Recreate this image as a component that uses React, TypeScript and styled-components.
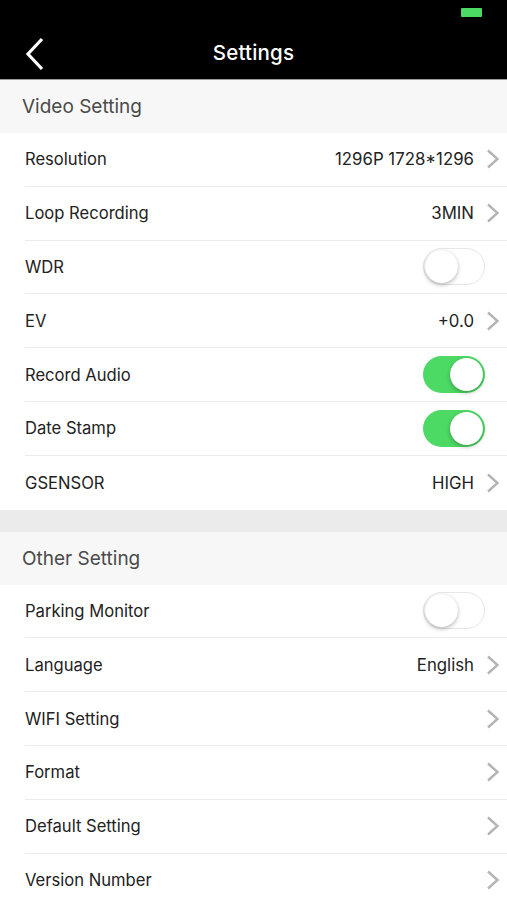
import React, { useState } from 'react'
import styled, { createGlobalStyle } from 'styled-components'

const GlobalStyle = createGlobalStyle`
  html, body {
    margin: 0;
    padding: 0;
    background: #ffffff;
  }
  body {
    font-family: Inter, "Noto Sans", "Liberation Sans", sans-serif;
    -webkit-font-smoothing: antialiased;
  }
`

const Page = styled.div`
  width: 507px;
  height: 900px;
  overflow: hidden;
  background: #ffffff;
`

const TopBar = styled.div`
  position: relative;
  height: 80px;
  background: #000000;
  border-bottom: 1px solid #9a9a9a;
  box-sizing: border-box;
  display: flex;
  align-items: center;
  justify-content: center;
  padding-top: 26px;
`

const Battery = styled.div`
  position: absolute;
  top: 8px;
  left: 461px;
  width: 21px;
  height: 9px;
  border-radius: 1px;
  background: #4cd964;
`

const BackButton = styled.button`
  position: absolute;
  left: 20px;
  top: 35px;
  width: 30px;
  height: 38px;
  padding: 0;
  border: none;
  background: transparent;
  display: flex;
  align-items: center;
  justify-content: center;
`

const Title = styled.h1`
  margin: 0;
  color: #ffffff;
  font-size: 20.5px;
  font-weight: 500;
  letter-spacing: 0.2px;
`

const SectionHeader = styled.div`
  height: 53px;
  background: #f7f7f7;
  display: flex;
  align-items: center;
  padding-left: 22px;
  font-size: 19px;
  color: #4a4a4a;
`

const Gap = styled.div`
  height: 22px;
  background: #ebebeb;
`

const List = styled.div`
  background: #ffffff;
  padding-left: 25px;
`

const Row = styled.div<{ $last?: boolean }>`
  height: 53.8px;
  box-sizing: border-box;
  display: flex;
  align-items: center;
  padding-right: 7px;
  border-bottom: ${(p) => (p.$last ? 'none' : '1px solid #ececec')};
`

const Label = styled.span`
  flex: 1;
  font-size: 16.6px;
  color: #222222;
`

const Value = styled.span`
  font-size: 16.8px;
  color: #222222;
  margin-right: 12px;
`

const ToggleTrack = styled.button<{ $on: boolean }>`
  position: relative;
  width: 62px;
  height: 37px;
  margin-right: 15px;
  padding: 0;
  border-radius: 19px;
  cursor: pointer;
  box-sizing: border-box;
  border: ${(p) => (p.$on ? 'none' : '1.5px solid #e6e6e6')};
  background: ${(p) => (p.$on ? '#4cd964' : '#ffffff')};
`

const ToggleKnob = styled.span<{ $on: boolean }>`
  position: absolute;
  top: ${(p) => (p.$on ? '2px' : '0.5px')};
  left: ${(p) => (p.$on ? '27px' : '0.5px')};
  width: 33px;
  height: 33px;
  border-radius: 50%;
  background: #ffffff;
  box-shadow: 0 2px 4px rgba(0, 0, 0, 0.25), 0 0 1px rgba(0, 0, 0, 0.15);
`

const Chevron = () => (
  <svg width="14" height="20" viewBox="0 0 14 20">
    <path d="M2 1.5 L11.5 10 L2 18.5" fill="none" stroke="#b4b4b4" strokeWidth="2.4" />
  </svg>
)

type Item =
  | { label: string; kind: 'value'; value?: string }
  | { label: string; kind: 'toggle'; on: boolean }

const videoItems: Item[] = [
  { label: 'Resolution', kind: 'value', value: '1296P 1728*1296' },
  { label: 'Loop Recording', kind: 'value', value: '3MIN' },
  { label: 'WDR', kind: 'toggle', on: false },
  { label: 'EV', kind: 'value', value: '+0.0' },
  { label: 'Record Audio', kind: 'toggle', on: true },
  { label: 'Date Stamp', kind: 'toggle', on: true },
  { label: 'GSENSOR', kind: 'value', value: 'HIGH' },
]

const otherItems: Item[] = [
  { label: 'Parking Monitor', kind: 'toggle', on: false },
  { label: 'Language', kind: 'value', value: 'English' },
  { label: 'WIFI Setting', kind: 'value' },
  { label: 'Format', kind: 'value' },
  { label: 'Default Setting', kind: 'value' },
  { label: 'Version Number', kind: 'value' },
]

const Toggle: React.FC<{ initial: boolean }> = ({ initial }) => {
  const [on, setOn] = useState(initial)
  return (
    <ToggleTrack $on={on} onClick={() => setOn(!on)}>
      <ToggleKnob $on={on} />
    </ToggleTrack>
  )
}

const SettingRow: React.FC<{ item: Item; last?: boolean }> = ({ item, last }) => (
  <Row $last={last}>
    <Label>{item.label}</Label>
    {item.kind === 'toggle' ? (
      <Toggle initial={item.on} />
    ) : (
      <>
        {item.value && <Value>{item.value}</Value>}
        <Chevron />
      </>
    )}
  </Row>
)

export default function App() {
  return (
    <Page>
      <GlobalStyle />
      <TopBar>
        <Battery />
        <BackButton>
          <svg width="20" height="34" viewBox="0 0 20 34">
            <path d="M17 2 L3 17 L17 32" fill="none" stroke="#ffffff" strokeWidth="3.2" />
          </svg>
        </BackButton>
        <Title>Settings</Title>
      </TopBar>
      <SectionHeader>Video Setting</SectionHeader>
      <List>
        {videoItems.map((it, i) => (
          <SettingRow key={it.label} item={it} last={i === videoItems.length - 1} />
        ))}
      </List>
      <Gap />
      <SectionHeader>Other Setting</SectionHeader>
      <List>
        {otherItems.map((it) => (
          <SettingRow key={it.label} item={it} />
        ))}
      </List>
    </Page>
  )
}
